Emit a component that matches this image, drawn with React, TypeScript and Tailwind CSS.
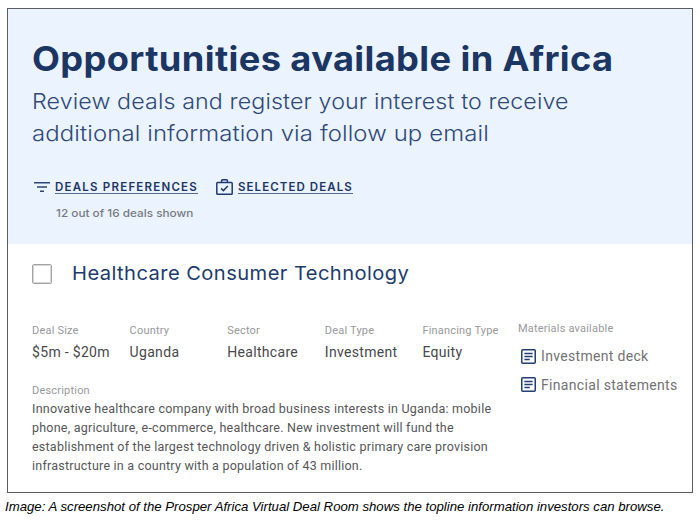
import React from 'react';

const fields = [
  { label: 'Deal Size', value: '$5m - $20m' },
  { label: 'Country', value: 'Uganda' },
  { label: 'Sector', value: 'Healthcare' },
  { label: 'Deal Type', value: 'Investment' },
  { label: 'Financing Type', value: 'Equity' },
];

const materials = ['Investment deck', 'Financial statements'];

const description = [
  'Innovative healthcare company with broad business interests in Uganda: mobile',
  'phone, agriculture, e-commerce, healthcare. New investment will fund the',
  'establishment of the largest technology driven & holistic primary care provision',
  'infrastructure in a country with a population of 43 million.',
];

function FilterIcon() {
  return (
    <svg className="h-[10px] w-4 shrink-0" viewBox="0 0 16 10" fill="#2c4775">
      <path d="M0 0h16v1.6H0zM3 4.2h10v1.6H3zM6 8.4h4v1.6H6z" />
    </svg>
  );
}

function CaseIcon() {
  return (
    <svg className="h-4 w-[17px] shrink-0" viewBox="0 0 17 16" fill="none" stroke="#1f3b6b" strokeWidth="1.5">
      <rect x="0.8" y="3.6" width="15.4" height="11.6" rx="0.8" />
      <path d="M5.6 3.4V1.6q0-.8.8-.8h4.2q.8 0 .8.8v1.8M5.1 9.4l2.3 2.2 4.4-4.5" />
    </svg>
  );
}

function DocumentIcon() {
  return (
    <svg className="h-[15px] w-[15px] shrink-0" viewBox="0 0 15 15" fill="none" stroke="#1f3f73" strokeWidth="1.5">
      <rect x="0.75" y="0.75" width="13.5" height="13.5" rx="1" />
      <path d="M3.4 4.4h8.2M3.4 7.5h8.2M3.4 10.6h5.4" />
    </svg>
  );
}

export default function App() {
  return (
    <main className="h-[525px] w-[700px] overflow-hidden bg-white pt-2 pl-[7px] font-['Roboto',sans-serif] whitespace-nowrap">
      <article className="h-[485px] w-[686px] border border-[#5c5d60] bg-white">
        <header className="h-[235px] bg-[#ebf3ff] pt-[30px] pl-6 font-['Inter',sans-serif] text-[#1c3664]">
          <h1 className="h-[40px] w-fit origin-left scale-x-[1.066] text-[34px] leading-[40px] font-bold tracking-[0.35px]">
            Opportunities available in Africa
          </h1>
          <p className="mt-[6px] text-[22px] leading-[32px] font-light tracking-[0.1px] text-[#2f4a79]">
            <span className="block w-fit origin-left scale-x-[1.057]">Review deals and register your interest to receive</span>
            <span className="block w-fit origin-left scale-x-[1.088]">additional information via follow up email</span>
          </p>
          <nav className="mt-[28px] flex h-5 items-center text-[11.5px] font-semibold">
            <div className="flex items-center pl-[2px]">
              <FilterIcon />
              <a className="ml-[5px] border-b border-[#526a92] leading-[12px] tracking-[1.22px]">DEALS PREFERENCES</a>
            </div>
            <div className="ml-[18px] flex items-center">
              <CaseIcon />
              <a className="ml-[5px] border-b border-[#526a92] leading-[12px] tracking-[1.08px]">SELECTED DEALS</a>
            </div>
          </nav>
          <p className="mt-[8px] ml-6 w-fit origin-left scale-x-[1.07] text-[11px] leading-[16px] font-medium text-[#777b81]">
            12 out of 16 deals shown
          </p>
        </header>

        <section className="pl-6">
          <div className="flex h-[60px] items-center">
            <span className="h-5 w-5 rounded-[2px] border-[1.5px] border-[#a4a4a4] outline-1 -outline-offset-2 outline-[#d6d6d6]" />
            <h2 className="ml-5 w-fit origin-left scale-x-[1.06] text-[19px] leading-6 font-normal tracking-[0.4px] text-[#1d3b6d] font-['Inter',sans-serif]">
              Healthcare Consumer Technology
            </h2>
          </div>

          <div className="flex pt-[19px]">
            <div className="w-[486px]">
              <dl className="grid grid-cols-[repeat(5,97.6px)]">
                {fields.map((field) => (
                  <div key={field.label}>
                    <dt className="text-[11px] leading-[16px] tracking-[0.2px] text-[#98999b]">{field.label}</dt>
                    <dd className="mt-[3px] text-[14px] leading-[20px] tracking-[0.32px] text-[#47484a]">{field.value}</dd>
                  </div>
                ))}
              </dl>
              <h3 className="mt-[21px] text-[11px] leading-[16px] tracking-[0.2px] text-[#98999b]">Description</h3>
              <p className="text-[12.5px] leading-[19px] tracking-[0.23px] text-[#555658]">
                {description.map((line) => (
                  <span key={line} className="block">{line}</span>
                ))}
              </p>
            </div>
            <aside className="-mt-[2px]">
              <h3 className="text-[11px] leading-[16px] tracking-[0.2px] text-[#98999b]">Materials available</h3>
              <ul className="mt-[5px] ml-[3px]">
                {materials.map((item) => (
                  <li key={item} className="flex h-[28.5px] items-center">
                    <DocumentIcon />
                    <span className="ml-[5px] text-[14px] leading-5 tracking-[0.32px] text-[#717274]">{item}</span>
                  </li>
                ))}
              </ul>
            </aside>
          </div>
        </section>
      </article>
      <p className="mt-[6px] -ml-[2px] font-['Liberation_Sans',sans-serif] text-[13.2px] leading-4 text-black italic">
        Image: A screenshot of the Prosper Africa Virtual Deal Room shows the topline information investors can browse.
      </p>
    </main>
  );
}
